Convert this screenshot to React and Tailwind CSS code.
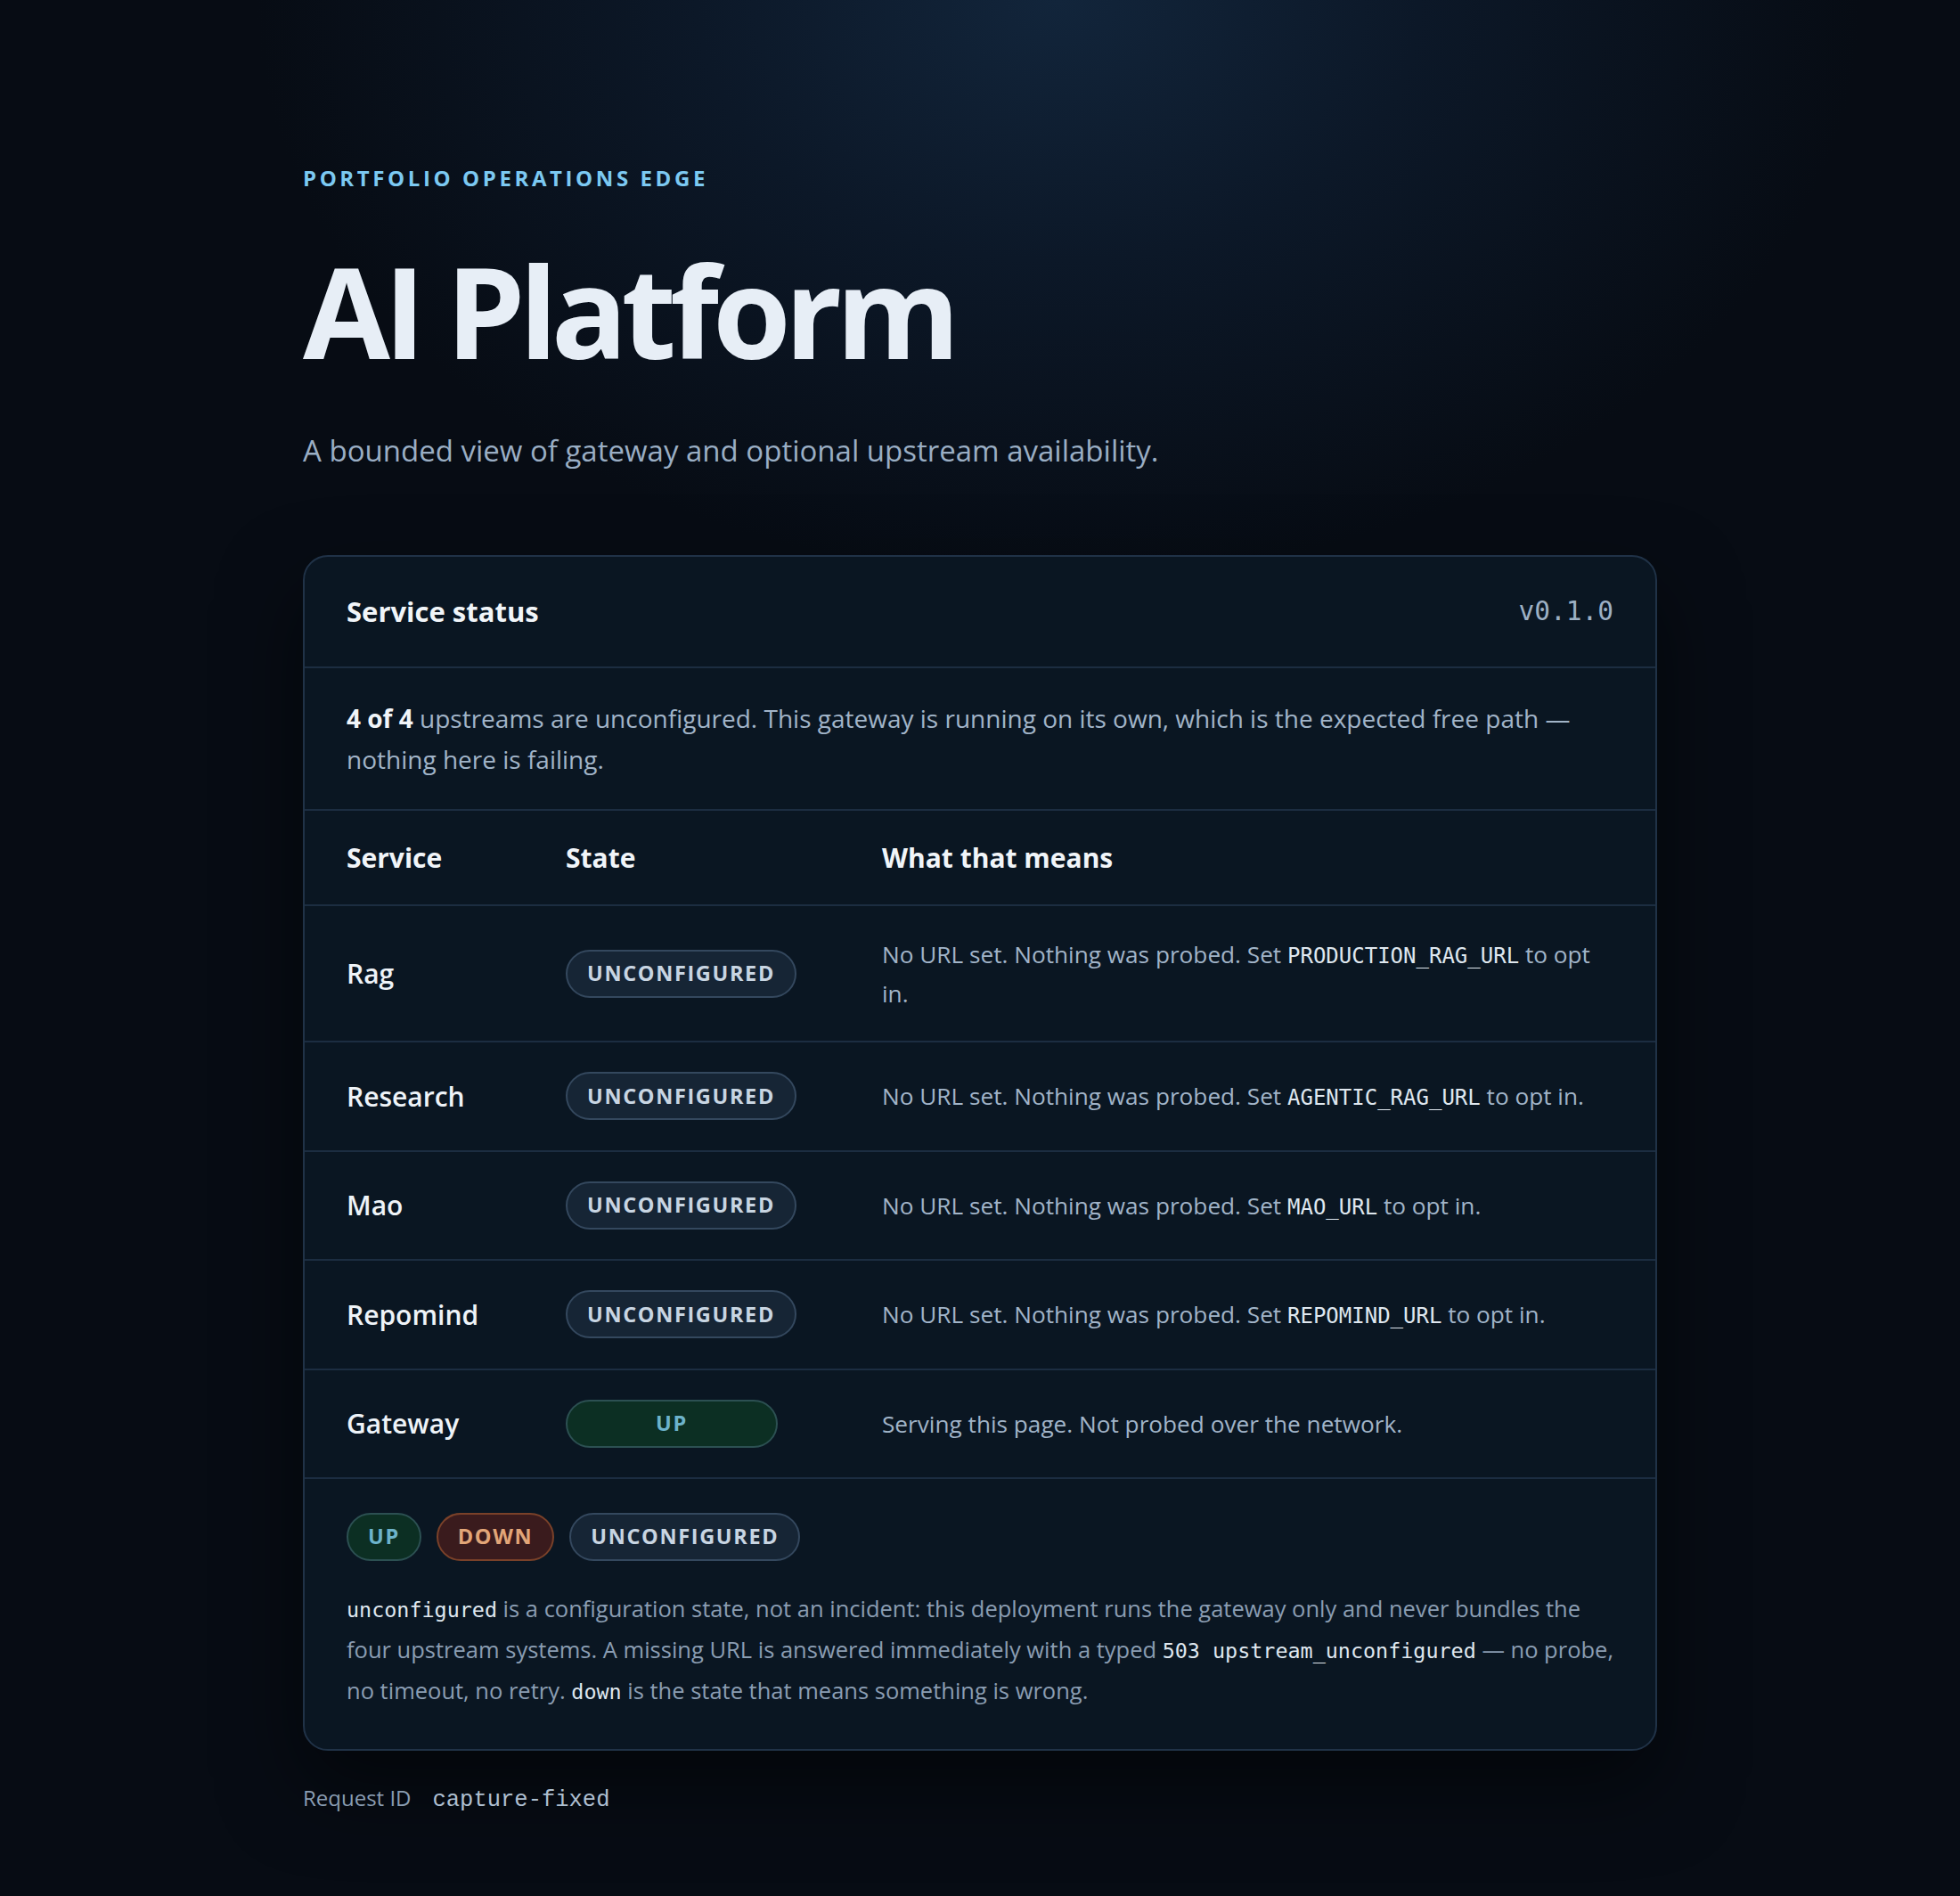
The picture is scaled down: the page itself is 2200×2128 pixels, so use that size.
import React from "react";

const rows = [
  { name: "Rag", state: "unconfigured", env: "PRODUCTION_RAG_URL" },
  { name: "Research", state: "unconfigured", env: "AGENTIC_RAG_URL" },
  { name: "Mao", state: "unconfigured", env: "MAO_URL" },
  { name: "Repomind", state: "unconfigured", env: "REPOMIND_URL" },
  { name: "Gateway", state: "up" },
];

function Badge({ state, wide }) {
  if (state === "up") {
    return (
      <span
        className={`inline-flex h-[54px] items-center justify-center rounded-full border-2 border-[#2c5052] bg-[#0c2f23] px-[22px] text-[23.5px] font-bold tracking-[0.07em] text-[#6db3cb] ${
          wide ? "min-w-[238px]" : ""
        }`}
      >
        UP
      </span>
    );
  }
  if (state === "down") {
    return (
      <span className="inline-flex h-[54px] items-center justify-center rounded-full border-2 border-[#7a4129] bg-[#3a1b1d] px-[22px] text-[23.5px] font-bold tracking-[0.07em] text-[#e2a678]">
        DOWN
      </span>
    );
  }
  return (
    <span
      className={`inline-flex h-[54px] items-center justify-center rounded-full border-2 border-[#34485e] bg-[#162535] px-[22px] text-[23.5px] font-bold tracking-[0.07em] text-[#c8d5e2] ${
        wide ? "min-w-[238px]" : ""
      }`}
    >
      UNCONFIGURED
    </span>
  );
}

function Code({ children, small }) {
  return (
    <code
      className={`font-['DejaVu_Sans_Mono',monospace] leading-none text-[#dfe7ef] ${
        small ? "text-[23.4px]" : "text-[24px]"
      }`}
    >
      {children}
    </code>
  );
}

export default function App() {
  return (
    <div className="min-h-[2128px] w-full bg-[#070c14] bg-[radial-gradient(ellipse_900px_650px_at_54%_0%,#12253b_0%,#0c1828_45%,#070c14_100%)] font-['Open_Sans','Noto_Sans',sans-serif]">
      <div className="mx-auto w-[1520px] pt-[185px] pb-[80px]">
        <div className="text-[24px] font-bold leading-[30px] tracking-[0.15em] text-[#7cc9f2]">
          PORTFOLIO OPERATIONS EDGE
        </div>
        <h1 className="mt-[58px] text-[142px] font-bold leading-[150px] tracking-[-0.05em] text-[#e7eef6]">
          AI Platform
        </h1>
        <p className="mt-[60px] text-[33px] leading-[46px] text-[#9aaec4]">
          A bounded view of gateway and optional upstream availability.
        </p>

        <section className="mt-[94px] overflow-hidden rounded-[28px] border-2 border-[#203247] bg-[#0a1622] shadow-[0_40px_90px_rgba(0,0,0,0.5)]">
          <div className="flex h-[125px] items-center justify-between border-b-2 border-[#1c2d41] px-[47px]">
            <h2 className="text-[31px] font-bold text-[#f1f5f9]">Service status</h2>
            <span className="font-['DejaVu_Sans_Mono',monospace] text-[29.5px] text-[#9db0c4]">
              v0.1.0
            </span>
          </div>

          <div className="border-b-2 border-[#1c2d41] px-[47px] py-[33px] text-[28px] leading-[46px] text-[#a1b4c8]">
            <strong className="font-bold text-[#f1f5f9]">4 of 4</strong> upstreams are
            unconfigured. This gateway is running on its own, which is the expected free
            path — nothing here is failing.
          </div>

          <div className="grid h-[107px] grid-cols-[246px_355px_1fr] items-center border-b-2 border-[#1c2d41] px-[47px] text-[30px] font-bold text-[#f1f5f9]">
            <div>Service</div>
            <div>State</div>
            <div>What that means</div>
          </div>

          {rows.map((r) => (
            <div
              key={r.name}
              className="grid min-h-[122.5px] grid-cols-[246px_355px_1fr] items-center border-b-2 border-[#1c2d41] px-[47px] py-[31.5px]"
            >
              <div className="text-[30px] font-semibold text-[#eef3f8]">{r.name}</div>
              <div>
                <Badge state={r.state} wide />
              </div>
              <div className="text-[26.2px] leading-[44px] text-[#a1b4c8]">
                {r.state === "up" ? (
                  "Serving this page. Not probed over the network."
                ) : (
                  <>
                    No URL set. Nothing was probed. Set <Code>{r.env}</Code> to opt in.
                  </>
                )}
              </div>
            </div>
          ))}

          <div className="px-[47px] pt-[38px] pb-[43px]">
            <div className="flex gap-[17px]">
              <Badge state="up" />
              <Badge state="down" />
              <Badge state="unconfigured" />
            </div>
            <p className="mt-[30px] text-[25.5px] leading-[46px] text-[#8a9db2]">
              <Code small>unconfigured</Code> is a configuration state, not an incident: this
              deployment runs the gateway only and never bundles the four upstream systems. A
              missing URL is answered immediately with a typed{" "}
              <Code small>503 upstream_unconfigured</Code> — no probe, no timeout, no retry.{" "}
              <Code small>down</Code> is the state that means something is wrong.
            </p>
          </div>
        </section>

        <div className="mt-[35px] flex items-baseline gap-[24px] text-[24px] text-[#8a9db2]">
          <span>Request ID</span>
          <span className="font-['Liberation_Mono',monospace] text-[25.5px] text-[#aebfd0]">
            capture-fixed
          </span>
        </div>
      </div>
    </div>
  );
}
